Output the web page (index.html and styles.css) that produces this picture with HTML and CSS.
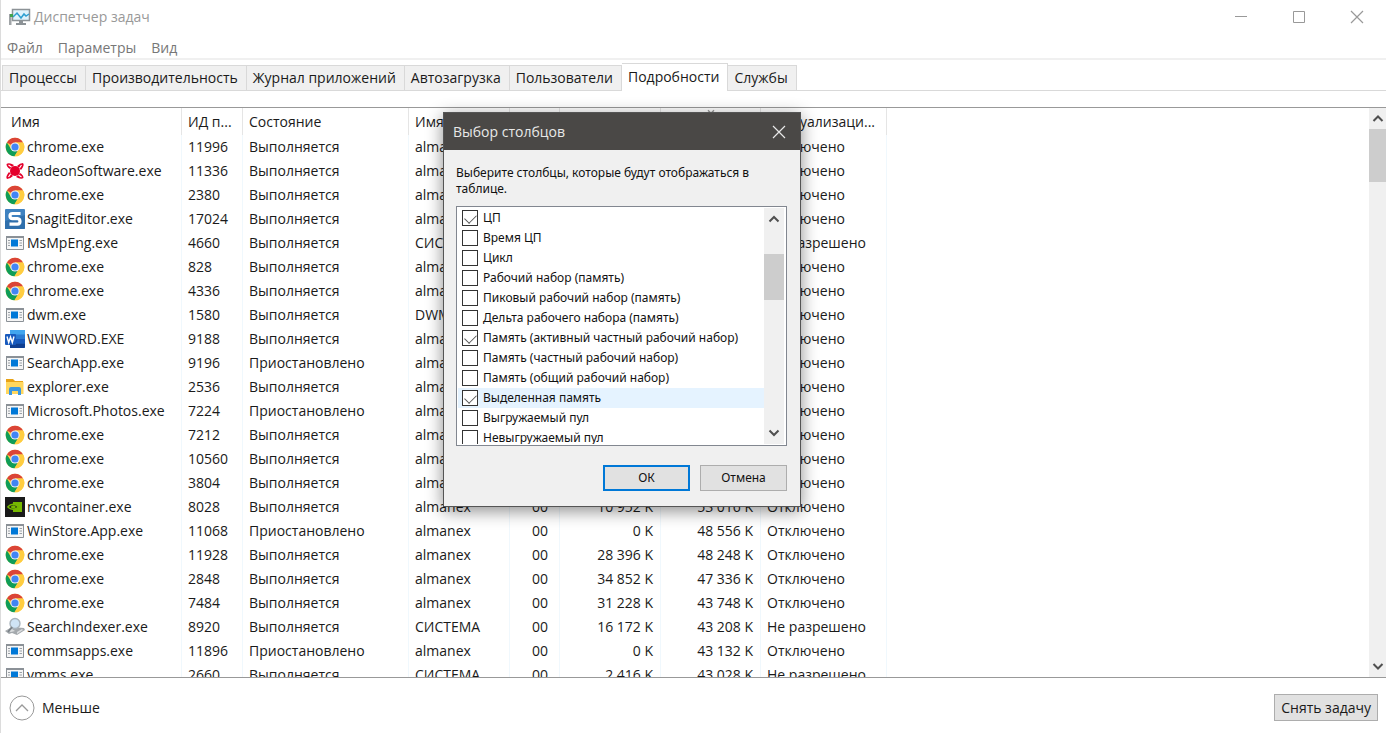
FILE: index.html
```html
<!doctype html>
<html lang="ru">
<head>
  <meta charset="UTF-8">
  <title>Диспетчер задач</title>
  <link rel="stylesheet" href="styles.css">
</head>
<body>
  <svg class="sprite" aria-hidden="true">
    <symbol id="chrome" viewBox="0 0 20 20">
      <circle cx="10" cy="10" r="9.3" fill="#fc4"/>
      <path d="M10 10 1.9 5.4A9.3 9.3 0 0 1 18.1 5.4H10z" fill="#db4437"/>
      <path d="M1.9 5.4A9.3 9.3 0 0 0 9.5 19.3L13.8 12 10 10 6 12z" fill="#0f9d58"/>
      <path d="M10 5.4h8.1A9.3 9.3 0 0 1 9.5 19.3L14 12.3z" fill="#ffcd40"/>
      <circle cx="10" cy="10" r="4.6" fill="#f1f1f1"/>
      <circle cx="10" cy="10" r="3.6" fill="#4285f4"/>
    </symbol>
    <symbol id="radeon" viewBox="0 0 20 20">
      <circle cx="10" cy="10" r="5" fill="#e4002b"/>
      <path d="M9 4Q4 1 1.500 3q0 3 3.500 5zM16 9q4-5 2-7-3 0-6 3zM4 11q-4 5-2 7 3 0 6-3zM11 16q5 3 7.500 1 0-3-3.500-5z" fill="#e4002b"/>
      <path d="m3.500 4 3 2M16.500 4l-2 3M3.500 16l2-3M16.500 16l-3-2" stroke="#fff" stroke-width="1.200"/>
    </symbol>
    <symbol id="snagit" viewBox="0 0 20 20">
      <rect width="20" height="20" rx="1" fill="#3f82c0"/>
      <path d="M0 12 20 6v13a1 1 0 0 1-1 1H0z" fill="#2f6fac"/>
      <path d="M15.500 4.500H7.500Q5 4.500 5 7t2.500 2.700h5Q15 10 15 12.500t-2.500 2.700H4.500" fill="none" stroke="#fff" stroke-width="3.200"/>
    </symbol>
    <symbol id="app" viewBox="0 0 20 20">
      <path d="M1.500 3.500h17v13h-17z" fill="#f5f5f5" stroke="#8b9197"/>
      <path d="M1 3h18v2H1z" fill="#8b9197"/>
      <path d="M6 6.500h7v7H6z" fill="#0078d7"/>
      <path d="M3 7.500h2M3 10h2M3 12.500h2M14.500 7.500h2.500M14.500 10h2.500M14.500 12.500h2.500" stroke="#9aa0a6"/>
    </symbol>
    <symbol id="word" viewBox="0 0 20 20">
      <rect x="5" y="1" width="15" height="18" rx="1" fill="#2b7cd3"/>
      <path d="M5 1h15v4.500H5z" fill="#41a5ee"/>
      <path d="M5 10h15v4.500H5z" fill="#185abd"/>
      <path d="M5 14.500h15V18a1 1 0 0 1-1 1H5z" fill="#103f91"/>
      <rect y="5" width="11" height="11" rx="1" fill="#185abd"/>
      <path d="m2 7.500 1.700 6L5.500 8l1.800 5.500 1.700-6" fill="none" stroke="#fff" stroke-width="1.400"/>
    </symbol>
    <symbol id="folder" viewBox="0 0 20 20">
      <path d="M1 2h7l2 2h8v4H1z" fill="#e8a317"/>
      <path d="M1 5h17.500v12H1z" fill="#ffd75e"/>
      <path d="M4 18v-6q0-2 2-2h8q2 0 2 2v6h-3v-4H7v4z" fill="#3b97e0"/>
    </symbol>
    <symbol id="nvidia" viewBox="0 0 20 20">
      <path d="M0 0h20v20H0z" fill="#1a1a1a"/>
      <path d="M8 5h9v10H8z" fill="#76b900"/>
      <path d="M2.500 10Q8 4.500 13.500 10 8 14.500 2.500 10" fill="#1a1a1a" stroke="#76b900" stroke-width="1.300"/>
      <path d="M5.500 10q3-3.500 5.500 0-2.500 3-5.500 0" fill="#76b900"/>
    </symbol>
    <symbol id="indexer" viewBox="0 0 20 20">
      <path d="m0 14 7-4 12 1 1 2-8 5-5-2-3 1z" fill="#a4a9ad"/>
      <path d="m2 14 5-2 3 2-4 1zM12 15l5-3 1 1-6 4z" fill="#d9dcde"/>
      <circle cx="10" cy="6.500" r="5" fill="#cfe4f5" stroke="#a9b4bd" stroke-width="1.400"/>
      <path d="m7 10-4 5" stroke="#7a8288" stroke-width="2"/>
    </symbol>
    <symbol id="up" viewBox="0 0 12 12"><path d="m1.500 8.500 4.500-4.500 4.500 4.500" fill="none" stroke="currentColor" stroke-width="2"/></symbol>
    <symbol id="down" viewBox="0 0 12 12"><path d="m1.500 3.500 4.500 4.500 4.500-4.500" fill="none" stroke="currentColor" stroke-width="2"/></symbol>
    <symbol id="close" viewBox="0 0 14 14"><path d="m1 1 12 12M13 1 1 13" fill="none" stroke="currentColor" stroke-width="1.200"/></symbol>
  </svg>

  <header class="titlebar">
    <svg class="logo" viewBox="0 0 22 18">
      <path d="M3.500 1.500h17v11h-17z" fill="#dff3fc" stroke="#8c9296" stroke-width="1.500"/>
      <path d="m4 9 4-4 4 5 3-4 2 2 3-2" fill="none" stroke="#2e9fd0" stroke-width="1.500"/>
      <path d="M10 13h4v2h3v2H7v-2h3z" fill="#8c9296"/>
      <path d="M0 6h2.500v11H0z" fill="#a0a4a7"/>
      <path d="M1 6h3v3H1z" fill="#3fa34d"/>
    </svg>
    <h1>Диспетчер задач</h1>
    <div class="controls">
      <button aria-label="Свернуть"><svg viewBox="0 0 14 14"><path d="M1 6.500h12" stroke="currentColor"/></svg></button>
      <button aria-label="Развернуть"><svg viewBox="0 0 14 14"><path d="M1.500 1.500h11v11h-11z" fill="none" stroke="currentColor"/></svg></button>
      <button aria-label="Закрыть"><svg><use href="#close"/></svg></button>
    </div>
  </header>

  <nav class="menu">
    <a href="#">Файл</a>
    <a href="#">Параметры</a>
    <a href="#">Вид</a>
  </nav>

  <div class="tabs" role="tablist">
    <button role="tab">Процессы</button>
    <button role="tab">Производительность</button>
    <button role="tab">Журнал приложений</button>
    <button role="tab">Автозагрузка</button>
    <button role="tab">Пользователи</button>
    <button role="tab" class="active" aria-selected="true">Подробности</button>
    <button role="tab">Службы</button>
  </div>

  <main class="list">
    <div class="rows">
      <table>
        <colgroup>
          <col class="c-name"><col class="c-pid"><col class="c-state"><col class="c-user">
          <col class="c-cpu"><col class="c-mem"><col class="c-commit"><col class="c-uac">
        </colgroup>
        <thead>
          <tr><th>Имя</th><th>ИД п...</th><th>Состояние</th><th>Имя</th><th></th><th></th><th class="sorted"><svg><use href="#down"/></svg></th><th class="cut">туализаци...</th></tr>
        </thead>
        <tbody>
          <tr><td><svg><use href="#chrome"/></svg>chrome.exe</td><td>11996</td><td>Выполняется</td><td>almanex</td><td></td><td></td><td></td><td>Отключено</td></tr>
          <tr><td><svg><use href="#radeon"/></svg>RadeonSoftware.exe</td><td>11336</td><td>Выполняется</td><td>almanex</td><td></td><td></td><td></td><td>Отключено</td></tr>
          <tr><td><svg><use href="#chrome"/></svg>chrome.exe</td><td>2380</td><td>Выполняется</td><td>almanex</td><td></td><td></td><td></td><td>Отключено</td></tr>
          <tr><td><svg><use href="#snagit"/></svg>SnagitEditor.exe</td><td>17024</td><td>Выполняется</td><td>almanex</td><td></td><td></td><td></td><td>Отключено</td></tr>
          <tr><td><svg><use href="#app"/></svg>MsMpEng.exe</td><td>4660</td><td>Выполняется</td><td>СИСТЕМА</td><td></td><td></td><td></td><td>Не разрешено</td></tr>
          <tr><td><svg><use href="#chrome"/></svg>chrome.exe</td><td>828</td><td>Выполняется</td><td>almanex</td><td></td><td></td><td></td><td>Отключено</td></tr>
          <tr><td><svg><use href="#chrome"/></svg>chrome.exe</td><td>4336</td><td>Выполняется</td><td>almanex</td><td></td><td></td><td></td><td>Отключено</td></tr>
          <tr><td><svg><use href="#app"/></svg>dwm.exe</td><td>1580</td><td>Выполняется</td><td>DWM-1</td><td></td><td></td><td></td><td>Отключено</td></tr>
          <tr><td><svg><use href="#word"/></svg>WINWORD.EXE</td><td>9188</td><td>Выполняется</td><td>almanex</td><td></td><td></td><td></td><td>Отключено</td></tr>
          <tr><td><svg><use href="#app"/></svg>SearchApp.exe</td><td>9196</td><td>Приостановлено</td><td>almanex</td><td></td><td></td><td></td><td>Отключено</td></tr>
          <tr><td><svg><use href="#folder"/></svg>explorer.exe</td><td>2536</td><td>Выполняется</td><td>almanex</td><td></td><td></td><td></td><td>Отключено</td></tr>
          <tr><td><svg><use href="#app"/></svg>Microsoft.Photos.exe</td><td>7224</td><td>Приостановлено</td><td>almanex</td><td></td><td></td><td></td><td>Отключено</td></tr>
          <tr><td><svg><use href="#chrome"/></svg>chrome.exe</td><td>7212</td><td>Выполняется</td><td>almanex</td><td></td><td></td><td></td><td>Отключено</td></tr>
          <tr><td><svg><use href="#chrome"/></svg>chrome.exe</td><td>10560</td><td>Выполняется</td><td>almanex</td><td></td><td></td><td></td><td>Отключено</td></tr>
          <tr><td><svg><use href="#chrome"/></svg>chrome.exe</td><td>3804</td><td>Выполняется</td><td>almanex</td><td></td><td></td><td></td><td>Отключено</td></tr>
          <tr><td><svg><use href="#nvidia"/></svg>nvcontainer.exe</td><td>8028</td><td>Выполняется</td><td>almanex</td><td>00</td><td>10 952 K</td><td>53 016 K</td><td>Отключено</td></tr>
          <tr><td><svg><use href="#app"/></svg>WinStore.App.exe</td><td>11068</td><td>Приостановлено</td><td>almanex</td><td>00</td><td>0 K</td><td>48 556 K</td><td>Отключено</td></tr>
          <tr><td><svg><use href="#chrome"/></svg>chrome.exe</td><td>11928</td><td>Выполняется</td><td>almanex</td><td>00</td><td>28 396 K</td><td>48 248 K</td><td>Отключено</td></tr>
          <tr><td><svg><use href="#chrome"/></svg>chrome.exe</td><td>2848</td><td>Выполняется</td><td>almanex</td><td>00</td><td>34 852 K</td><td>47 336 K</td><td>Отключено</td></tr>
          <tr><td><svg><use href="#chrome"/></svg>chrome.exe</td><td>7484</td><td>Выполняется</td><td>almanex</td><td>00</td><td>31 228 K</td><td>43 748 K</td><td>Отключено</td></tr>
          <tr><td><svg><use href="#indexer"/></svg>SearchIndexer.exe</td><td>8920</td><td>Выполняется</td><td>СИСТЕМА</td><td>00</td><td>16 172 K</td><td>43 208 K</td><td>Не разрешено</td></tr>
          <tr><td><svg><use href="#app"/></svg>commsapps.exe</td><td>11896</td><td>Приостановлено</td><td>almanex</td><td>00</td><td>0 K</td><td>43 132 K</td><td>Отключено</td></tr>
          <tr><td><svg><use href="#app"/></svg>vmms.exe</td><td>2660</td><td>Выполняется</td><td>СИСТЕМА</td><td>00</td><td>2 416 K</td><td>43 028 K</td><td>Не разрешено</td></tr>
        </tbody>
      </table>
    </div>
    <div class="scrollbar">
      <svg><use href="#up"/></svg>
      <div class="thumb"></div>
      <svg><use href="#down"/></svg>
    </div>
  </main>

  <footer>
    <button class="less">
      <svg viewBox="0 0 26 26"><circle cx="13" cy="13" r="12" fill="none" stroke="#999"/><path d="m7 16 6-6 6 6" fill="none" stroke="#999" stroke-width="1.300"/></svg>
      Меньше
    </button>
    <button class="end-task">Снять задачу</button>
  </footer>

  <section class="dialog" role="dialog" aria-labelledby="dialog-title">
    <div class="dialog-title">
      <h2 id="dialog-title">Выбор столбцов</h2>
      <button aria-label="Закрыть"><svg><use href="#close"/></svg></button>
    </div>
    <div class="dialog-body">
      <p>Выберите столбцы, которые будут отображаться в таблице.</p>
      <div class="columns">
        <div class="options">
          <label><input type="checkbox" checked>ЦП</label>
          <label><input type="checkbox">Время ЦП</label>
          <label><input type="checkbox">Цикл</label>
          <label><input type="checkbox">Рабочий набор (память)</label>
          <label><input type="checkbox">Пиковый рабочий набор (память)</label>
          <label><input type="checkbox">Дельта рабочего набора (память)</label>
          <label><input type="checkbox" checked>Память (активный частный рабочий набор)</label>
          <label><input type="checkbox">Память (частный рабочий набор)</label>
          <label><input type="checkbox">Память (общий рабочий набор)</label>
          <label class="selected"><input type="checkbox" checked>Выделенная память</label>
          <label><input type="checkbox">Выгружаемый пул</label>
          <label><input type="checkbox">Невыгружаемый пул</label>
        </div>
        <div class="scrollbar">
          <svg><use href="#up"/></svg>
          <div class="thumb"></div>
          <svg><use href="#down"/></svg>
        </div>
      </div>
      <div class="actions">
        <button class="ok">ОК</button>
        <button>Отмена</button>
      </div>
    </div>
  </section>
</body>
</html>
```
FILE: styles.css
```css
* {
  box-sizing: border-box;
}
body {
  margin: 0;
  height: 100vh;
  display: flex;
  flex-direction: column;
  overflow: hidden;
  background: #fff;
  border-left: 1px solid #dcdcdc;
  color: #1a1a1a;
  font: 14px/24px "Open Sans", "Noto Sans", sans-serif;
}
button {
  font: inherit;
  color: inherit;
  padding: 0;
  border: 0;
  background: none;
}
h1, h2, p {
  margin: 0;
  font-size: inherit;
  font-weight: normal;
}
.sprite {
  display: none;
}

.titlebar {
  display: flex;
  align-items: center;
  height: 34px;
  padding-left: 8px;
  color: #999;
}
.logo {
  width: 22px;
  height: 18px;
  margin-right: 3px;
}
.controls {
  display: flex;
  margin-left: auto;
}
.controls button {
  width: 58px;
  height: 32px;
}
.controls svg {
  width: 14px;
  height: 14px;
  display: block;
  margin: auto;
}
.menu {
  display: flex;
  gap: 15px;
  height: 26px;
  padding: 2px 6px;
  border-bottom: 2px solid #f0f0f0;
}
.menu a {
  color: #777;
  text-decoration: none;
}

.tabs {
  display: flex;
  align-items: flex-end;
  height: 31px;
  padding-left: 1px;
  border-bottom: 1px solid #d9d9d9;
}
.tabs button {
  height: 25px;
  padding: 0 8px 0 6px;
  border: 1px solid #d9d9d9;
  border-width: 1px 1px 0 0;
  background: #f0f0f0;
}
.tabs button:first-child {
  border-left-width: 1px;
}
.tabs .active {
  height: 28px;
  margin-bottom: -1px;
  padding-bottom: 2px;
  background: #fff;
}

.list {
  flex: 1;
  min-height: 0;
  display: flex;
  margin-top: 16px;
  border: 1px solid #999;
  border-width: 1px 0;
}
.rows {
  flex: 1;
  overflow: hidden;
}
table {
  table-layout: fixed;
  width: 886px;
  border-collapse: separate;
  border-spacing: 0;
}
.c-name { width: 181px; }
.c-pid { width: 61px; }
.c-state { width: 166px; }
.c-user { width: 101px; }
.c-cpu { width: 50px; }
.c-mem { width: 101px; }
.c-commit { width: 100px; }
.c-uac { width: 126px; }
th, td {
  height: 24px;
  padding: 0 6px;
  border-right: 1px solid #f0f8fd;
  text-align: left;
  font-weight: normal;
  white-space: nowrap;
  overflow: hidden;
}
th {
  height: 27px;
  border-color: #e5e5e5;
}
th:first-child {
  padding-left: 10px;
}
th.cut {
  text-align: right;
  padding-right: 11px;
}
.sorted {
  vertical-align: top;
  text-align: center;
}
.sorted svg {
  display: block;
  width: 10px;
  height: 8px;
  margin: 0 auto;
  color: #999;
}
td:first-child {
  padding-left: 4px;
}
td svg {
  width: 20px;
  height: 20px;
  margin-right: 2px;
  vertical-align: -5px;
}
td:nth-child(5), td:nth-child(6), td:nth-child(7) {
  text-align: right;
  padding-right: 7px;
}
td:nth-child(5) {
  padding-right: 11px;
}

.scrollbar {
  display: flex;
  flex-direction: column;
  align-items: center;
  width: 17px;
  background: #f0f0f0;
  color: #505050;
}
.scrollbar svg {
  width: 12px;
  height: 21px;
}
.scrollbar svg:last-child {
  margin-top: auto;
}
.thumb {
  width: 100%;
  height: 53px;
  background: #cdcdcd;
}

footer {
  display: flex;
  justify-content: space-between;
  align-items: center;
  height: 55px;
  padding: 4px 8px 0;
}
.less {
  display: flex;
  align-items: center;
  gap: 7px;
}
.less svg {
  width: 26px;
  height: 26px;
}
.end-task {
  height: 27px;
  padding: 0 6px;
  border: 1px solid #adadad;
  background: #e1e1e1;
}

.dialog {
  position: absolute;
  left: 443px;
  top: 112px;
  width: 358px;
  border: 1px solid #555;
  background: #f0f0f0;
  box-shadow: 0 4px 16px rgba(0, 0, 0, 0.45);
  color: #111;
  font: 12px/16px "Noto Sans", "Open Sans", sans-serif;
}
.dialog-title {
  display: flex;
  justify-content: space-between;
  align-items: center;
  height: 37px;
  padding: 0 14px 0 9px;
  background: #4a4846;
  color: #e8e8e8;
  font: 14px/24px "Open Sans", "Noto Sans", sans-serif;
}
.dialog-title svg {
  display: block;
  width: 14px;
  height: 14px;
}
.dialog-body {
  padding: 15px 13px 15px 12px;
}
.columns {
  display: flex;
  height: 240px;
  margin: 9px 0 19px;
  padding: 1px;
  border: 1px solid #828790;
  background: #fff;
}
.options {
  flex: 1;
  overflow: hidden;
}
.options label {
  display: flex;
  align-items: center;
  gap: 5px;
  height: 20px;
  padding-left: 4px;
  white-space: nowrap;
}
.options .selected {
  background: #e5f3ff;
}
.options input {
  appearance: none;
  width: 16px;
  height: 16px;
  margin: 0;
  border: 1px solid #333;
  background: #fff;
}
.options input:checked::before {
  content: "";
  display: block;
  width: 10px;
  height: 6px;
  margin: 3px 2px;
  border: solid #555;
  border-width: 0 0 1px 1px;
  transform: rotate(-45deg);
}
.columns .scrollbar {
  width: 20px;
  margin-right: 1px;
}
.columns .scrollbar svg {
  height: 22px;
}
.columns .thumb {
  height: 46px;
  margin-top: 24px;
}
.actions {
  display: flex;
  justify-content: flex-end;
  gap: 10px;
}
.actions button {
  width: 87px;
  height: 26px;
  border: 1px solid #adadad;
  background: #e1e1e1;
}
.actions .ok {
  border: 2px solid #0078d7;
}
```
